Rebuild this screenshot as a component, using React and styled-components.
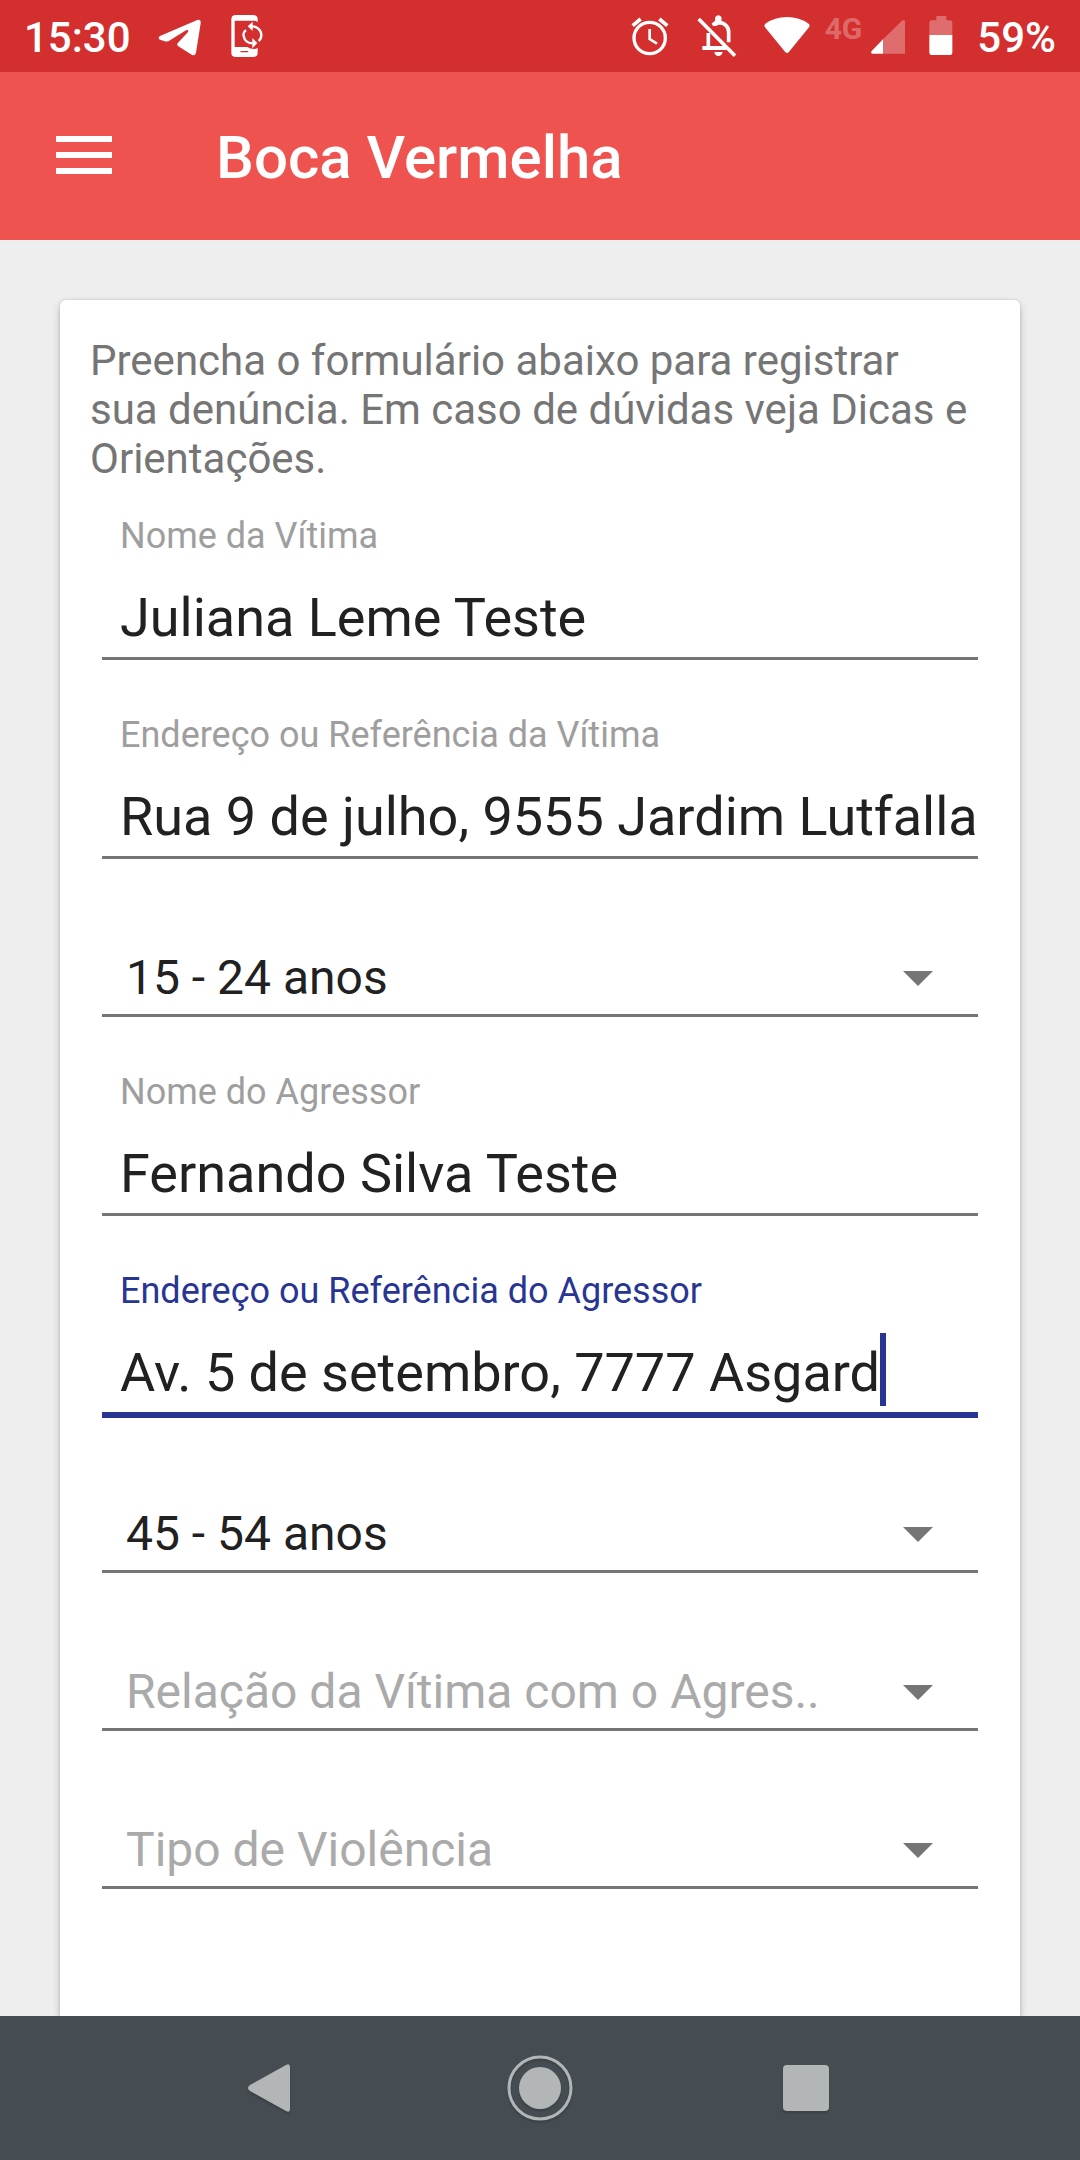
import React from "react";
import styled, { createGlobalStyle } from "styled-components";

const GlobalStyle = createGlobalStyle`
  *, *::before, *::after { box-sizing: border-box; }
  body {
    margin: 0;
    background: #eeeeee;
    font-family: Roboto, "Liberation Sans", sans-serif;
    color: #212121;
  }
`;

const Screen = styled.div`
  display: flex;
  flex-direction: column;
  min-height: 100vh;
`;

const StatusBar = styled.div`
  display: flex;
  justify-content: space-between;
  height: 72px;
  padding: 0 24px;
  background: #d32f2f;
  color: #ffffff;
  font-size: 42px;
  font-weight: 500;
  line-height: 76px;
`;

const StatusGroup = styled.div`
  display: flex;
  align-items: flex-start;
  gap: ${(p) => p.$gap}px;
`;

const StatusIcon = styled.svg`
  display: block;
  flex: none;
  height: 72px;
`;

const Network = styled.div`
  display: flex;
  align-items: flex-start;
  gap: 9px;
  margin-left: -9px;
`;

const NetworkType = styled.span`
  font-size: 30px;
  font-weight: 700;
  line-height: 58px;
  color: rgba(255, 255, 255, 0.3);
`;

const Toolbar = styled.header`
  display: flex;
  align-items: center;
  gap: 92px;
  height: 168px;
  padding: 0 44px;
  background: #ef5350;
`;

const MenuButton = styled.button`
  display: flex;
  flex-direction: column;
  justify-content: center;
  gap: 10px;
  width: 80px;
  height: 80px;
  padding: 0 12px 2px;
  border: 0;
  background: none;
`;

const MenuBar = styled.span`
  height: 6px;
  background: #ffffff;
`;

const Title = styled.h1`
  margin: 0;
  padding-top: 4px;
  font-size: 60px;
  font-weight: 500;
  line-height: 70px;
  color: #ffffff;
`;

const Main = styled.main`
  flex: 1;
  display: flex;
  padding: 60px 60px 0;
  overflow: hidden;
`;

const Card = styled.form`
  flex: 1;
  min-width: 0;
  padding: 36px 30px 0;
  border-radius: 6px 6px 0 0;
  background: #ffffff;
  box-shadow: 0 4px 9px rgba(0, 0, 0, 0.2), 0 0 3px rgba(0, 0, 0, 0.14);
`;

const Intro = styled.p`
  margin: 0;
  padding-right: 20px;
  font-size: 42px;
  line-height: 49px;
  color: #757575;
`;

const Fields = styled.div`
  display: flex;
  flex-direction: column;
  gap: 53px;
  padding: 31px 12px 60px;
`;

const Field = styled.div`
  border-bottom: 3px solid ${(p) => (p.$active ? "#283593" : "#757575")};
  box-shadow: ${(p) => (p.$active ? "0 3px 0 #283593" : "none")};
`;

const Label = styled.label`
  display: block;
  padding-left: 18px;
  font-size: 36px;
  line-height: 44px;
  color: ${(p) => (p.$active ? "#283593" : "#9e9e9e")};
`;

const InputRow = styled.div`
  display: flex;
  align-items: flex-end;
  height: 99px;
  padding-left: 18px;
`;

const Input = styled.input`
  field-sizing: ${(p) => (p.$active ? "content" : "fixed")};
  flex: ${(p) => (p.$active ? "none" : "1")};
  min-width: 0;
  max-width: 100%;
  height: 99px;
  padding: 27px 0 8px;
  border: 0;
  outline: 0;
  background: none;
  font: 400 54px/64px Roboto, "Liberation Sans", sans-serif;
  color: #212121;
`;

const Caret = styled.span`
  flex: none;
  width: 6px;
  height: 73px;
  margin-bottom: 6px;
  background: #283593;
`;

const SelectBox = styled.div`
  display: grid;
  border-bottom: 3px solid #757575;
`;

const Select = styled.select`
  grid-area: 1 / 1;
  min-width: 0;
  width: 100%;
  height: 102px;
  padding: 37px 90px 8px 24px;
  border: 0;
  outline: 0;
  appearance: none;
  background: none;
  font: 400 48px/57px Roboto, "Liberation Sans", sans-serif;
  color: ${(p) => (p.$empty ? "#aaaaaa" : "#212121")};
`;

const Arrow = styled.svg`
  grid-area: 1 / 1;
  place-self: end;
  width: 30px;
  height: 15px;
  margin: 0 45px 28px 0;
  fill: #757575;
  pointer-events: none;
`;

const NavBar = styled.nav`
  display: flex;
  justify-content: center;
  height: 144px;
  background: #454c52;
`;

const NavButton = styled.button`
  display: flex;
  align-items: center;
  justify-content: center;
  width: 25%;
  padding: 0;
  border: 0;
  background: none;
`;

const NavIcon = styled.svg`
  width: 84px;
  height: 84px;
  fill: #b2b6b7;
  filter: drop-shadow(0 2px 1px rgba(0, 0, 0, 0.16));
`;

function TextField({ id, label, value, active }) {
  return (
    <Field $active={active}>
      <Label htmlFor={id} $active={active}>{label}</Label>
      <InputRow>
        <Input id={id} type="text" defaultValue={value} $active={active} />
        {active && <Caret />}
      </InputRow>
    </Field>
  );
}

function SelectField({ label, value, empty }) {
  return (
    <SelectBox>
      <Select aria-label={label} defaultValue={value} $empty={empty}>
        <option>{value}</option>
      </Select>
      <Arrow viewBox="0 0 30 15"><path d="M0 0H30L15 15Z" /></Arrow>
    </SelectBox>
  );
}

function TelegramIcon() {
  return (
    <StatusIcon width="46" viewBox="472 0 138 216" fill="#fff">
      <path d="M478 108L590 60Q601 57 600 70L586 158Q583 169 573 164L532 138Q527 134 532 128L562 96Q565 88 556 91L508 121Q500 127 490 123L478 119Q470 114 478 108Z" />
    </StatusIcon>
  );
}

function PhoneSyncIcon() {
  return (
    <StatusIcon width="32" viewBox="695 0 96 216" fill="#fff">
      <path d="M710 45H761Q775 45 775 58V66Q769 62 764 62H706V141H744Q752 147 764 147Q770 147 775 144V158Q775 171 761 171H710Q696 171 696 158V58Q696 45 710 45Z" />
      <path d="M725 155H745" stroke="#d32f2f" strokeWidth="4" strokeLinecap="round" />
      <path d="M745 79L760 65V93Z M774 129L759 114V145Z" />
      <path d="M758 79C773 79 786 90 786 105C786 112 783 119 778 123M740 91C732 96 732 105 733 108C735 121 746 130 760 130" fill="none" stroke="#fff" strokeWidth="7" />
    </StatusIcon>
  );
}

function AlarmIcon() {
  return (
    <StatusIcon width="43" viewBox="92 0 129 216" fill="none" stroke="#fff">
      <circle cx="151" cy="114" r="47" strokeWidth="10" />
      <path d="M151 87V117L173 131" strokeWidth="8" />
      <path d="M100 77L124 57M204 77L180 57" strokeWidth="11" />
    </StatusIcon>
  );
}

function BellOffIcon() {
  return (
    <StatusIcon width="43" viewBox="293 0 129 216" fill="none" stroke="#fff">
      <path d="M327 99V145" strokeWidth="11" />
      <path d="M309 144H382" strokeWidth="12" />
      <path d="M340 74Q349 68 358 68C376 68 388 80 388 96V127" strokeWidth="11" />
      <path d="M338 76L348 60A10 10 0 1 1 366 60L370 68L350 78Z" fill="#fff" stroke="none" />
      <path d="M345 156H370Q367 168 357 168T345 156Z" fill="#fff" stroke="none" />
      <path d="M298 57L407 167" strokeWidth="11" />
    </StatusIcon>
  );
}

function WifiIcon() {
  return (
    <StatusIcon width="46" viewBox="494 0 138 216" fill="#fff">
      <path d="M563 159Q560 159 557 155L497 82Q493 76 498 71Q526 51 563 51Q600 51 628 71Q633 76 629 82L569 155Q566 159 563 159Z" />
    </StatusIcon>
  );
}

function SignalIcon() {
  return (
    <StatusIcon width="34" viewBox="813 0 102 216" fill="#fff">
      <path d="M849 118L906 62Q915 56 915 66V161H849Z" opacity="0.3" />
      <path d="M849 118V161H816Q811 158 815 153Z" />
    </StatusIcon>
  );
}

function BatteryIcon() {
  return (
    <StatusIcon width="24" viewBox="989 0 72 216" fill="#fff">
      <path d="M990 105V68Q990 61 997 61H1011V48H1041V61H1052Q1059 61 1059 68V105Z" opacity="0.3" />
      <path d="M990 105H1059V158Q1059 165 1052 165H997Q990 165 990 158Z" />
    </StatusIcon>
  );
}

export default function App() {
  return (
    <Screen>
      <GlobalStyle />
      <StatusBar>
        <StatusGroup $gap={27}>
          <span>15:30</span>
          <TelegramIcon />
          <PhoneSyncIcon />
        </StatusGroup>
        <StatusGroup $gap={24}>
          <AlarmIcon />
          <BellOffIcon />
          <WifiIcon />
          <Network>
            <NetworkType>4G</NetworkType>
            <SignalIcon />
          </Network>
          <BatteryIcon />
          <span>59%</span>
        </StatusGroup>
      </StatusBar>
      <Toolbar>
        <MenuButton type="button" aria-label="Menu">
          <MenuBar />
          <MenuBar />
          <MenuBar />
        </MenuButton>
        <Title>Boca Vermelha</Title>
      </Toolbar>
      <Main>
        <Card>
          <Intro>
            Preencha o formulário abaixo para registrar sua denúncia. Em caso de
            dúvidas veja Dicas e Orientações.
          </Intro>
          <Fields>
            <TextField id="vitima" label="Nome da Vítima" value="Juliana Leme Teste" />
            <TextField
              id="endereco-vitima"
              label="Endereço ou Referência da Vítima"
              value="Rua 9 de julho, 9555 Jardim Lutfalla"
            />
            <SelectField label="Idade da Vítima" value="15 - 24 anos" />
            <TextField id="agressor" label="Nome do Agressor" value="Fernando Silva Teste" />
            <TextField
              id="endereco-agressor"
              label="Endereço ou Referência do Agressor"
              value="Av. 5 de setembro, 7777 Asgard"
              active
            />
            <SelectField label="Idade do Agressor" value="45 - 54 anos" />
            <SelectField label="Relação" value="Relação da Vítima com o Agres.." empty />
            <SelectField label="Violência" value="Tipo de Violência" empty />
          </Fields>
        </Card>
      </Main>
      <NavBar>
        <NavButton type="button" aria-label="Voltar">
          <NavIcon viewBox="0 0 84 84">
            <path d="M22 39L58 19Q62 17 62 21V63Q62 67 58 65L22 45Q18 42 22 39Z" />
          </NavIcon>
        </NavButton>
        <NavButton type="button" aria-label="Início">
          <NavIcon viewBox="0 0 84 84">
            <circle cx="42" cy="42" r="21" />
            <circle cx="42" cy="42" r="31" fill="none" stroke="#b2b6b7" strokeWidth="3" />
          </NavIcon>
        </NavButton>
        <NavButton type="button" aria-label="Recentes">
          <NavIcon viewBox="0 0 84 84">
            <rect x="15" y="19" width="46" height="46" rx="4" />
          </NavIcon>
        </NavButton>
      </NavBar>
    </Screen>
  );
}
